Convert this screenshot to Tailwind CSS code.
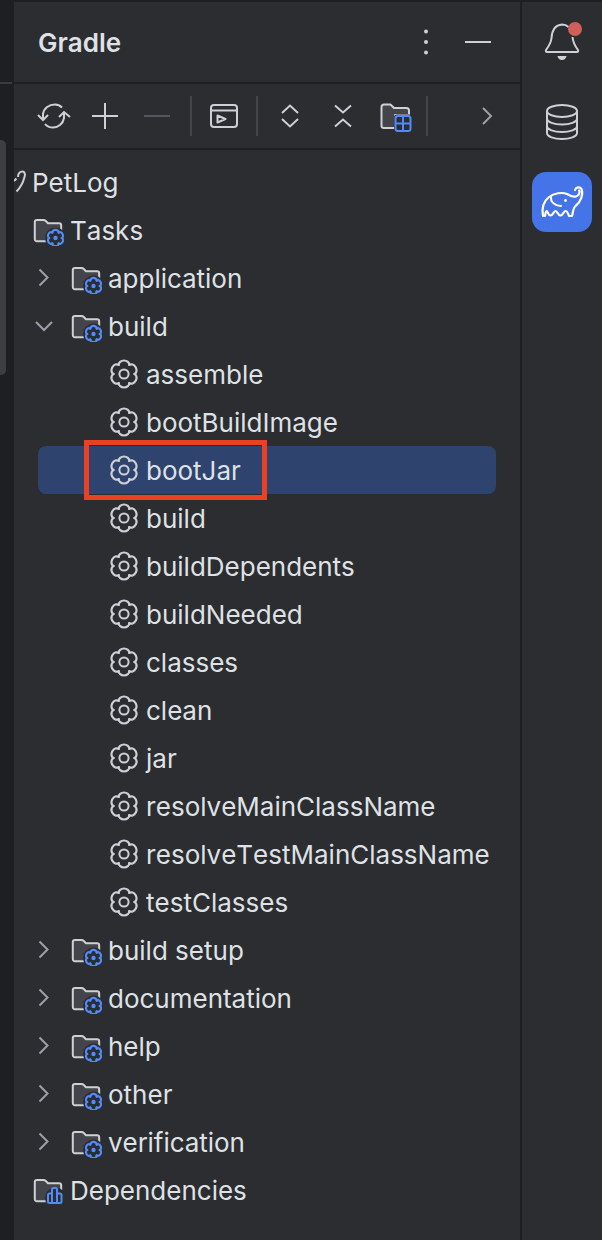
<!DOCTYPE html>
<html>
<head>
<meta charset="utf-8">
<script src="https://cdn.jsdelivr.net/npm/@tailwindcss/browser@4"></script>
</head>
<body class="m-0 bg-[#1e1f22]">
<svg class="absolute w-0 h-0" aria-hidden="true">
  <defs>
    <path id="lobe" d="M10.75 6.91C10.5 4.5 13 2.5 16 2.5C19 2.5 21.5 4.5 21.25 6.91" fill="none" stroke-linecap="round"/>
    <g id="gearshape">
      <use href="#lobe"/>
      <use href="#lobe" transform="rotate(60 16 16)"/>
      <use href="#lobe" transform="rotate(120 16 16)"/>
      <use href="#lobe" transform="rotate(180 16 16)"/>
      <use href="#lobe" transform="rotate(240 16 16)"/>
      <use href="#lobe" transform="rotate(300 16 16)"/>
    </g>
    <symbol id="gear" viewBox="0 0 32 32">
      <use href="#gearshape" stroke="#ced0d6" stroke-width="2.2"/>
      <circle cx="16" cy="16" r="4.6" fill="none" stroke="#ced0d6" stroke-width="2"/>
    </symbol>
    <symbol id="folder" viewBox="0 0 32 32">
      <path d="M5 5H11.5C12.5 5 13.2 5.4 13.8 6L16 8.2H27C28.4 8.2 29.2 9 29.2 10.4V24C29.2 25.4 28.4 26.2 27 26.2H5C3.6 26.2 2.8 25.4 2.8 24V7.2C2.8 5.800 3.6 5 5 5Z" fill="#43454a" stroke="#ced0d6" stroke-width="2" stroke-linejoin="round"/>
      <circle cx="23.5" cy="23" r="10.500" fill="#2b2d30"/>
    </symbol>
    <symbol id="taskfolder" viewBox="0 -1 32 32">
      <use href="#folder" width="32" height="32"/>
      <g transform="translate(13.9 13.4) scale(.6)">
        <use href="#gearshape" stroke="#548af7" stroke-width="3.6"/>
      </g>
      <circle cx="23.5" cy="23" r="2.200" fill="#548af7"/>
    </symbol>
    <symbol id="chev-r" viewBox="0 0 20 20">
      <path d="M5.5 1.5L13.5 9.5L5.5 17.5" fill="none" stroke="#9da0a8" stroke-width="2"/>
    </symbol>
    <symbol id="chev-d" viewBox="0 0 20 20">
      <path d="M2 6L10 14L18 6" fill="none" stroke="#9da0a8" stroke-width="2"/>
    </symbol>
  </defs>
</svg>

<div class="w-[602px] h-[1240px] flex overflow-hidden font-['Inter',sans-serif] text-[26px] text-[#dfe1e5] [font-kerning:none]">
  <!-- left gutter -->
  <div class="w-[14px] shrink-0 flex flex-col bg-[#1e1f22]">
    <div class="h-[82px]"></div>
    <div class="h-[2px] w-[12px] bg-[#393b40]"></div>
    <div class="h-[56px]"></div>
    <div class="h-[235px] w-[6px] rounded-r-[5px] bg-[#3c3e41]"></div>
  </div>

  <!-- gradle panel -->
  <div class="w-[506px] shrink-0 flex flex-col bg-[#2b2d30] border-t-2 border-[#1e1f22]">
    <div class="h-[80px] shrink-0 flex items-center pl-6">
      <span class="font-semibold leading-none mt-[2px]">Gradle</span>
      <div class="ml-auto flex items-center pr-[29px]">
        <svg width="8" height="28" viewBox="0 0 8 28" class="-mt-[1px]"><circle cx="4" cy="3.5" r="2" fill="#ced0d6"/><circle cx="4" cy="14" r="2" fill="#ced0d6"/><circle cx="4" cy="24.5" r="2" fill="#ced0d6"/></svg>
        <svg width="26" height="4" viewBox="0 0 26 4" class="ml-[35px]"><path d="M0 2H26" stroke="#ced0d6" stroke-width="2"/></svg>
      </div>
    </div>
    <div class="h-[68px] shrink-0 flex items-center border-y-2 border-[#1e1f22] pl-[22px]">
      <svg width="36" height="32" viewBox="0 0 36 32" class="shrink-0">
        <path d="M7 19V14C8 8 13 4.500 19 4.500C22 4.500 24 5.500 26 7.500M28 13V18C27 24 22 27.500 17 27.500C14 27.500 11 26.500 9 24" fill="none" stroke="#ced0d6" stroke-width="2"/>
        <path d="M2 15L7 20L12 15M23 17L28 12L34 17" fill="none" stroke="#ced0d6" stroke-width="2"/>
      </svg>
      <svg width="26" height="26" viewBox="0 0 26 26" class="ml-[20px] shrink-0"><path d="M0 13H26M13 0V26" stroke="#ced0d6" stroke-width="2"/></svg>
      <svg width="26" height="4" viewBox="0 0 26 4" class="ml-[26px] shrink-0"><path d="M0 2H26" stroke="#55575c" stroke-width="2"/></svg>
      <div class="w-[2px] h-10 bg-[#43454a] ml-[20px] shrink-0"></div>
      <svg width="28" height="24" viewBox="0 0 28 24" class="ml-[18px] shrink-0">
        <rect x="1" y="1" width="26" height="22" rx="3" fill="none" stroke="#ced0d6" stroke-width="2"/>
        <path d="M1 6.500H27" stroke="#ced0d6" stroke-width="2"/>
        <path d="M7.500 11.500L15.500 15L7.500 18.500Z" fill="none" stroke="#ced0d6" stroke-width="2" stroke-linejoin="round"/>
      </svg>
      <div class="w-[2px] h-10 bg-[#43454a] ml-[18px] shrink-0"></div>
      <svg width="18" height="24" viewBox="0 0 18 24" class="ml-[23px] shrink-0"><path d="M1 9L9 1.500L17 9M1 15L9 22.500L17 15" fill="none" stroke="#ced0d6" stroke-width="2"/></svg>
      <svg width="18" height="24" viewBox="0 0 18 24" class="ml-[35px] shrink-0"><path d="M1 1.500L9 8.500L17 1.500M1 22.500L9 15.500L17 22.500" fill="none" stroke="#ced0d6" stroke-width="2"/></svg>
      <svg width="32" height="32" viewBox="0 0 32 32" class="ml-[28px] shrink-0 mt-[2px]">
        <path d="M4 3.500H10.500L14 7H26.500C28 7 29 8 29 9.500V14H15V27H4C2.500 27 1.500 26 1.500 25V6C1.500 4.500 2.500 3.500 4 3.500Z" fill="#43454a" stroke="#ced0d6" stroke-width="2" stroke-linejoin="round"/>
        <rect x="14" y="13.500" width="18" height="18" rx="3" fill="#2b2d30"/>
        <rect x="15.500" y="15" width="15" height="15" rx="2.500" fill="#2b2d30" stroke="#548af7" stroke-width="2"/>
        <path d="M23 15V30M15.500 22.500H30.500" stroke="#548af7" stroke-width="2"/>
      </svg>
      <div class="w-[2px] h-10 bg-[#43454a] ml-[14px] shrink-0"></div>
      <svg width="12" height="20" viewBox="0 0 12 20" class="ml-[53px] shrink-0"><path d="M2 2L10 10L2 18" fill="none" stroke="#9da0a8" stroke-width="2"/></svg>
    </div>

    <div class="pt-[8px] flex flex-col">
      <div class="h-12 flex items-center">
        <svg width="16" height="26" viewBox="0 0 16 26" class="shrink-0"><path d="M4 8C4 4 6.500 2.500 8.500 2.500C10.500 2.500 11.500 5 10.500 8C9.500 12 7 18 2.500 22.500M0 12L2.500 9.500" fill="none" stroke="#ced0d6" stroke-width="2"/></svg>
        <span class="ml-[2px]">PetLog</span>
      </div>
      <div class="h-12 flex items-center pl-[18px]"><svg width="32" height="32" class="shrink-0"><use href="#taskfolder"/></svg><span class="ml-[6px]">Tasks</span></div>

      <div class="h-12 flex items-center pl-5"><svg width="20" height="20" class="shrink-0"><use href="#chev-r"/></svg><svg width="32" height="32" class="ml-4 shrink-0"><use href="#taskfolder"/></svg><span class="ml-[6px]">application</span></div>
      <div class="h-12 flex items-center pl-5"><svg width="20" height="20" class="shrink-0"><use href="#chev-d"/></svg><svg width="32" height="32" class="ml-4 shrink-0"><use href="#taskfolder"/></svg><span class="ml-[6px]">build</span></div>

      <div class="h-12 flex items-center pl-[94px]"><svg width="32" height="32" class="shrink-0"><use href="#gear"/></svg><span class="ml-[6px]">assemble</span></div>
      <div class="h-12 flex items-center pl-[94px]"><svg width="32" height="32" class="shrink-0"><use href="#gear"/></svg><span class="ml-[6px]">bootBuildImage</span></div>
      <div class="h-12 flex items-center pl-[70px] ml-6 w-[458px] rounded-lg bg-[#2e436e] relative">
        <svg width="32" height="32" class="shrink-0"><use href="#gear"/></svg><span class="ml-[6px]">bootJar</span>
        <div class="absolute left-[46px] -top-[6px] w-[183px] h-[60px] border-[5px] border-[#ea4024]"></div>
      </div>
      <div class="h-12 flex items-center pl-[94px]"><svg width="32" height="32" class="shrink-0"><use href="#gear"/></svg><span class="ml-[6px]">build</span></div>
      <div class="h-12 flex items-center pl-[94px]"><svg width="32" height="32" class="shrink-0"><use href="#gear"/></svg><span class="ml-[6px]">buildDependents</span></div>
      <div class="h-12 flex items-center pl-[94px]"><svg width="32" height="32" class="shrink-0"><use href="#gear"/></svg><span class="ml-[6px]">buildNeeded</span></div>
      <div class="h-12 flex items-center pl-[94px]"><svg width="32" height="32" class="shrink-0"><use href="#gear"/></svg><span class="ml-[6px]">classes</span></div>
      <div class="h-12 flex items-center pl-[94px]"><svg width="32" height="32" class="shrink-0"><use href="#gear"/></svg><span class="ml-[6px]">clean</span></div>
      <div class="h-12 flex items-center pl-[94px]"><svg width="32" height="32" class="shrink-0"><use href="#gear"/></svg><span class="ml-[6px]">jar</span></div>
      <div class="h-12 flex items-center pl-[94px]"><svg width="32" height="32" class="shrink-0"><use href="#gear"/></svg><span class="ml-[6px]">resolveMainClassName</span></div>
      <div class="h-12 flex items-center pl-[94px]"><svg width="32" height="32" class="shrink-0"><use href="#gear"/></svg><span class="ml-[6px]">resolveTestMainClassName</span></div>
      <div class="h-12 flex items-center pl-[94px]"><svg width="32" height="32" class="shrink-0"><use href="#gear"/></svg><span class="ml-[6px]">testClasses</span></div>

      <div class="h-12 flex items-center pl-5"><svg width="20" height="20" class="shrink-0"><use href="#chev-r"/></svg><svg width="32" height="32" class="ml-4 shrink-0"><use href="#taskfolder"/></svg><span class="ml-[6px]">build setup</span></div>
      <div class="h-12 flex items-center pl-5"><svg width="20" height="20" class="shrink-0"><use href="#chev-r"/></svg><svg width="32" height="32" class="ml-4 shrink-0"><use href="#taskfolder"/></svg><span class="ml-[6px]">documentation</span></div>
      <div class="h-12 flex items-center pl-5"><svg width="20" height="20" class="shrink-0"><use href="#chev-r"/></svg><svg width="32" height="32" class="ml-4 shrink-0"><use href="#taskfolder"/></svg><span class="ml-[6px]">help</span></div>
      <div class="h-12 flex items-center pl-5"><svg width="20" height="20" class="shrink-0"><use href="#chev-r"/></svg><svg width="32" height="32" class="ml-4 shrink-0"><use href="#taskfolder"/></svg><span class="ml-[6px]">other</span></div>
      <div class="h-12 flex items-center pl-5"><svg width="20" height="20" class="shrink-0"><use href="#chev-r"/></svg><svg width="32" height="32" class="ml-4 shrink-0"><use href="#taskfolder"/></svg><span class="ml-[6px]">verification</span></div>

      <div class="h-12 flex items-center pl-[18px]">
        <svg width="32" height="32" viewBox="0 -1 32 32" class="shrink-0">
          <use href="#folder" width="32" height="32"/>
          <path d="M16 27.500V20C16 19 16.500 18.500 17.500 18.500H20V27.500M20 27.500V14.500C20 13.500 20.500 13 21.500 13H23.500C24.500 13 25 13.500 25 14.500V27.500M25 27.500V18.500H28C29 18.500 29.500 19 29.500 20V26.500C29.500 27.500 29 28 28 28H17.500C16.500 28 16 27.500 16 26.500" fill="none" stroke="#548af7" stroke-width="2"/>
        </svg>
        <span class="ml-[6px]">Dependencies</span>
      </div>
    </div>
  </div>

  <!-- right tool strip -->
  <div class="flex-1 flex flex-col items-center bg-[#2b2d30] border-l-2 border-[#1e1f22] border-t-2 border-t-[#1e1f22] pt-[20px]">
    <div class="relative w-[36px] h-[38px] shrink-0">
      <svg width="36" height="38" viewBox="0 0 36 38">
        <path d="M24.500 5C23 3.500 21 2.500 18 2.500C10.500 3 8 9 7.500 16C7 21 5 24 2 28C1.500 29 2 30 3 30H33C34 30 34.500 29 34 28C31 24 29 21 28.500 15" fill="none" stroke="#ced0d6" stroke-width="2" stroke-linejoin="round"/>
        <path d="M13.500 34H22.500C21.800 37.500 19.500 38 18 38C16.500 38 14.200 37.500 13.500 34Z" fill="#ced0d6"/>
      </svg>
      <div class="absolute top-0 -right-[2px] w-[14px] h-[14px] rounded-full bg-[#cf5f5b]"></div>
    </div>
    <svg width="34" height="36" viewBox="0 0 34 36" class="mt-[44px] shrink-0">
      <ellipse cx="17" cy="7" rx="15" ry="6" fill="none" stroke="#ced0d6" stroke-width="2"/>
      <path d="M2 7V29C2 32.500 9 35 17 35C25 35 32 32.500 32 29V7M2 14.500C2 18 9 20.500 17 20.500C25 20.500 32 18 32 14.500M2 22C2 25.500 9 28 17 28C25 28 32 25.500 32 22" fill="none" stroke="#ced0d6" stroke-width="2"/>
    </svg>
    <div class="w-[60px] h-[60px] rounded-[14px] bg-[#4574e8] mt-[32px] shrink-0 flex items-center justify-center">
      <svg width="60" height="60" viewBox="0 0 60 60">
        <path d="M11 44C9.500 36 12 29 17 25C22 21 30 20 35 22C38 23.500 41 25.500 44 24.500C47 23.500 48.500 20 47 18.500" fill="none" stroke="#ffffff" stroke-width="2.200" stroke-linecap="round" stroke-linejoin="round"/>
        <path d="M43 18C44 15 48 14.500 49.500 17C51.500 22 49 30 43.500 34C41 36 41 41 40 44H37C36 41 35 39 33.500 39C31.500 39 31 43.500 28.500 43.500C26 43.500 25.500 39 23.500 39C21.500 39 21 43.500 18.500 43.500C16 43.500 16 39 14.500 39C13.500 39 13.500 42 13 44H11" fill="none" stroke="#ffffff" stroke-width="2.200" stroke-linecap="round" stroke-linejoin="round"/>
        <path d="M19 25C18.500 29 21 33 29 34" fill="none" stroke="#ffffff" stroke-width="2" stroke-linecap="round"/>
        <circle cx="33.500" cy="28.500" r="1.400" fill="#ffffff"/>
      </svg>
    </div>
  </div>
</div>
</body>
</html>
